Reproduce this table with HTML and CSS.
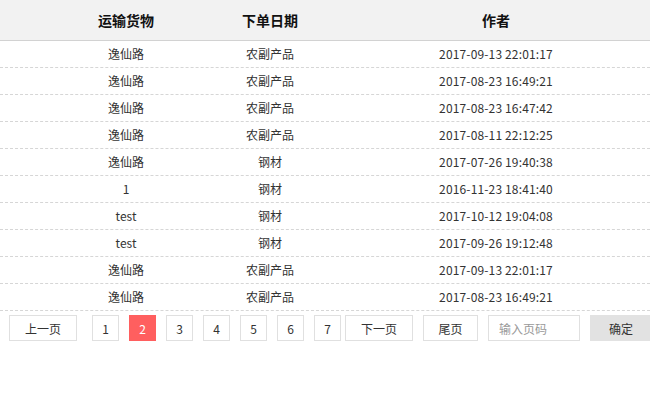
FILE: index.html
```html
<!DOCTYPE html>
<html lang="zh-CN">
<head>
<meta charset="utf-8">
<link rel="stylesheet" href="styles.css">
</head>
<body>
<div class="table">
  <div class="row head">
    <div class="cell"></div>
    <div class="cell">运输货物</div>
    <div class="cell">下单日期</div>
    <div class="cell">作者</div>
  </div>
  <div class="row"><div class="cell"></div><div class="cell">逸仙路</div><div class="cell">农副产品</div><div class="cell date">2017-09-13 22:01:17</div></div>
  <div class="row"><div class="cell"></div><div class="cell">逸仙路</div><div class="cell">农副产品</div><div class="cell date">2017-08-23 16:49:21</div></div>
  <div class="row"><div class="cell"></div><div class="cell">逸仙路</div><div class="cell">农副产品</div><div class="cell date">2017-08-23 16:47:42</div></div>
  <div class="row"><div class="cell"></div><div class="cell">逸仙路</div><div class="cell">农副产品</div><div class="cell date">2017-08-11 22:12:25</div></div>
  <div class="row"><div class="cell"></div><div class="cell">逸仙路</div><div class="cell">钢材</div><div class="cell date">2017-07-26 19:40:38</div></div>
  <div class="row"><div class="cell"></div><div class="cell">1</div><div class="cell">钢材</div><div class="cell date">2016-11-23 18:41:40</div></div>
  <div class="row"><div class="cell"></div><div class="cell">test</div><div class="cell">钢材</div><div class="cell date">2017-10-12 19:04:08</div></div>
  <div class="row"><div class="cell"></div><div class="cell">test</div><div class="cell">钢材</div><div class="cell date">2017-09-26 19:12:48</div></div>
  <div class="row"><div class="cell"></div><div class="cell">逸仙路</div><div class="cell">农副产品</div><div class="cell date">2017-09-13 22:01:17</div></div>
  <div class="row"><div class="cell"></div><div class="cell">逸仙路</div><div class="cell">农副产品</div><div class="cell date">2017-08-23 16:49:21</div></div>
</div>
<div class="pager">
  <span class="btn wide prev">上一页</span>
  <span class="btn num">1</span>
  <span class="btn num active">2</span>
  <span class="btn num">3</span>
  <span class="btn num">4</span>
  <span class="btn num">5</span>
  <span class="btn num">6</span>
  <span class="btn num lastnum">7</span>
  <span class="btn wide">下一页</span>
  <span class="btn last">尾页</span>
  <input class="jump" type="text" placeholder="输入页码">
  <span class="btn ok">确定</span>
</div>
</body>
</html>
```
FILE: styles.css
```css
html, body {
  margin: 0;
  padding: 0;
  background: #fff;
}
body {
  width: 650px;
  overflow: hidden;
  font-family: "Noto Sans CJK SC", "Noto Sans", sans-serif;
  font-size: 12px;
  color: #333;
}
.table {
  display: flex;
  flex-direction: column;
}
.row {
  display: grid;
  grid-template-columns: 54px 144px 144px 1fr;
  height: 26px;
  border-bottom: 1px dashed #d6d6d6;
  align-items: center;
}
.row.head {
  height: 40px;
  background: #f2f2f2;
  border-bottom: 1px solid #d2d2d2;
  font-size: 14px;
  font-weight: bold;
  color: #111;
}
.cell {
  text-align: center;
  line-height: 16px;
}
.date {
  letter-spacing: 0.15px;
}
.pager {
  display: flex;
  padding: 4px 0 0 9px;
  white-space: nowrap;
}
.btn, .jump {
  box-sizing: border-box;
  height: 26px;
  margin-right: 10px;
  border: 1px solid #e0e0e0;
  display: flex;
  align-items: center;
  justify-content: center;
  font-size: 12px;
  color: #333;
  background: #fff;
  flex: none;
}
.wide { width: 68px; }
.prev { margin-right: 15px; }
.num { width: 27px; }
.lastnum { margin-right: 4px; }
.last { width: 55px; }
.active {
  background: #ff5f5f;
  border-color: #ff5f5f;
  color: #fff;
}
.jump {
  width: 92px;
  padding: 0 10px;
  font-family: inherit;
  outline: none;
  justify-content: flex-start;
}
.jump::placeholder { color: #999; }
.ok {
  width: 62px;
  margin-right: 0;
  background: #e2e2e2;
  border-color: #e2e2e2;
}
```
